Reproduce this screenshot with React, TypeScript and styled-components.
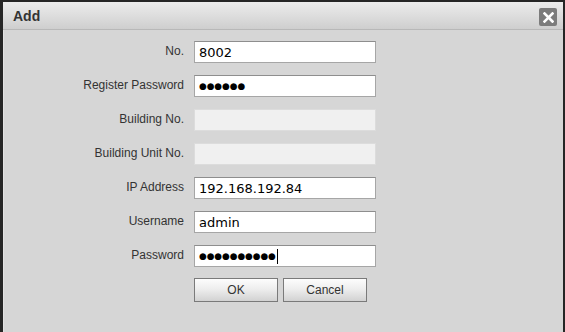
import React, { ReactElement } from "react";
import styled, { createGlobalStyle } from "styled-components";

type FieldDef = {
  label: string;
  value?: string;
  secret?: boolean;
  disabled?: boolean;
  focus?: boolean;
};

const fields: FieldDef[] = [
  { label: "No.", value: "8002" },
  { label: "Register Password", value: "123456", secret: true },
  { label: "Building No.", disabled: true },
  { label: "Building Unit No.", disabled: true },
  { label: "IP Address", value: "192.168.192.84" },
  { label: "Username", value: "admin" },
  { label: "Password", value: "admin12345", secret: true, focus: true },
];

function App(): ReactElement {
  return (
    <>
      <GlobalStyle />
      <Dialog>
        <TitleBar>
          <Title>Add</Title>
          <CloseButton aria-label="Close">
            <svg width="11" height="11" viewBox="0 0 11 11">
              <path
                d="M1.5 1.5 L9.5 9.5 M9.5 1.5 L1.5 9.5"
                stroke="#fff"
                strokeWidth="2.6"
                strokeLinecap="square"
              />
            </svg>
          </CloseButton>
        </TitleBar>
        <Body>
          <Form>
            {fields.map((f) => (
              <React.Fragment key={f.label}>
                <Label>{f.label}</Label>
                <Field $disabled={f.disabled}>
                  {f.secret ? (
                    <Dots>{"\u25CF".repeat((f.value ?? "").length)}</Dots>
                  ) : (
                    f.value
                  )}
                  {f.focus && <Caret />}
                </Field>
              </React.Fragment>
            ))}
            <span />
            <Buttons>
              <Button>OK</Button>
              <Button>Cancel</Button>
            </Buttons>
          </Form>
        </Body>
      </Dialog>
    </>
  );
}

const GlobalStyle = createGlobalStyle`
  html, body {
    margin: 0;
    padding: 0;
    background: #262626;
    overflow: hidden;
  }
  body {
    font-family: "Liberation Sans", Arial, sans-serif;
  }
`;

const Dialog = styled.div`
  margin-top: 2px;
  margin-left: 3px;
  margin-right: 2px;
  height: calc(100vh - 2px);
  background: #d6d6d6;
  display: flex;
  flex-direction: column;
  box-shadow: inset 1px 0 0 #e2e2e2;
`;

const TitleBar = styled.div`
  height: 27px;
  border-bottom: 1px solid #b8b8b8;
  background: linear-gradient(to bottom, #ececec 0%, #dcdcdc 55%, #cecece 100%);
  display: flex;
  align-items: center;
  justify-content: space-between;
  padding: 0 6px 0 10px;
`;

const Title = styled.span`
  font-weight: bold;
  font-size: 14px;
  color: #333;
  padding-top: 1px;
`;

const CloseButton = styled.button`
  width: 18px;
  height: 18px;
  padding: 0;
  border: none;
  border-radius: 2px;
  background: #7c7c7c;
  display: flex;
  align-items: center;
  justify-content: center;
  margin-top: 3px;
`;

const Body = styled.div`
  padding-top: 11px;
`;

const Form = styled.div`
  display: grid;
  grid-template-columns: 181px 182px;
  grid-auto-rows: 22px;
  column-gap: 10px;
  row-gap: 12px;
`;

const Label = styled.label`
  font-size: 12px;
  color: #333;
  text-align: right;
  line-height: 20px;
  white-space: nowrap;
`;

type FieldProps = { $disabled?: boolean };
const Field = styled.div<FieldProps>`
  box-sizing: border-box;
  width: 182px;
  height: 22px;
  padding: 0 4px;
  display: flex;
  align-items: center;
  border: 1px solid ${(p) => (p.$disabled ? "#dcdcdc" : "#a6a6a6")};
  border-top-color: ${(p) => (p.$disabled ? "#dcdcdc" : "#8e8e8e")};
  background: ${(p) => (p.$disabled ? "#f0f0f0" : "#fff")};
  font-family: "DejaVu Sans", Verdana, sans-serif;
  font-size: 13px;
  color: #000;
  white-space: nowrap;
`;

const Dots = styled.span`
  font-size: 8.8px;
`;

const Caret = styled.span`
  width: 1px;
  height: 15px;
  margin-left: 1px;
  background: #000;
`;

const Buttons = styled.div`
  display: flex;
  gap: 5px;
  margin-top: -1px;
`;

const Button = styled.button`
  box-sizing: border-box;
  width: 84px;
  height: 24px;
  padding: 0;
  border: 1px solid #7a7a7a;
  background: linear-gradient(to bottom, #fdfdfd 0%, #eeeeee 45%, #d2d2d2 100%);
  font-family: "Liberation Sans", Arial, sans-serif;
  font-size: 12px;
  color: #333;
`;

export default App;
